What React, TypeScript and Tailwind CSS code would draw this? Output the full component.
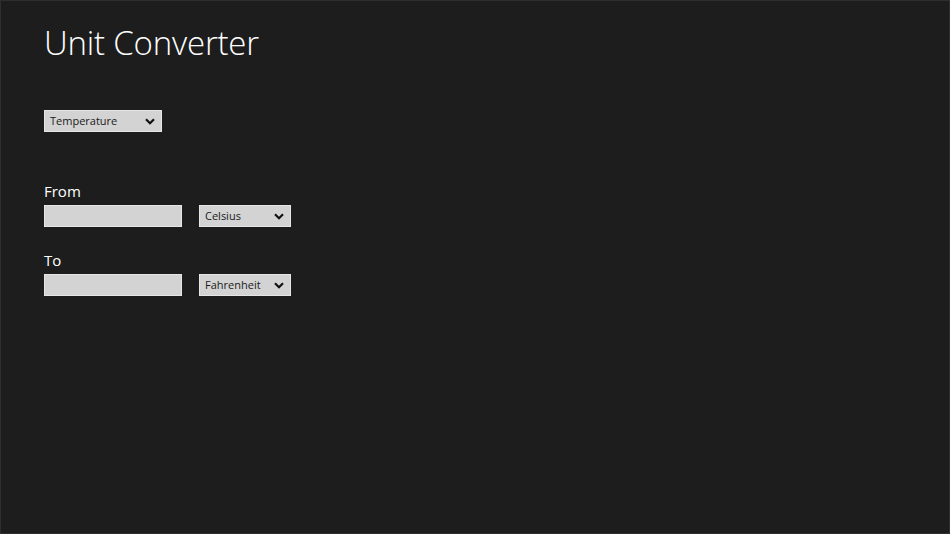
import React from 'react';

const Chevron = () => (
  <svg width="10" height="7" viewBox="0 0 10 7" className="shrink-0">
    <path d="M1 1.2 L5 5.2 L9 1.2" fill="none" stroke="#111" strokeWidth="2.2" />
  </svg>
);

const Select: React.FC<{ label: string; className: string }> = ({ label, className }) => (
  <div className={`flex h-[22px] items-center justify-between border border-[#e6e6e6] bg-[#d3d3d3] pl-[5px] pr-[6px] text-[11px] text-[#1a1a1a] ${className}`}>
    <span>{label}</span>
    <Chevron />
  </div>
);

const App: React.FC = () => {
  return (
    <div
      className="h-[534px] w-[950px] overflow-hidden border border-[#2e2e2e] bg-[#1d1d1d] text-white"
      style={{ fontFamily: '"Open Sans", "Noto Sans", sans-serif' }}
    >
      <div className="flex flex-col pl-[43px] pt-[22px]">
        <h1 className="text-[33px] font-light leading-[40px] tracking-[-0.2px]">Unit Converter</h1>
        <Select label="Temperature" className="mt-[47px] w-[118px]" />

        <div className="mt-[49px] text-[15px] leading-[20px]">From</div>
        <div className="mt-[4px] flex gap-[17px]">
          <div className="h-[22px] w-[138px] border border-[#e6e6e6] bg-[#d3d3d3]" />
          <Select label="Celsius" className="w-[92px]" />
        </div>

        <div className="mt-[23px] text-[15px] leading-[20px]">To</div>
        <div className="mt-[4px] flex gap-[17px]">
          <div className="h-[22px] w-[138px] border border-[#e6e6e6] bg-[#d3d3d3]" />
          <Select label="Fahrenheit" className="w-[92px]" />
        </div>
      </div>
    </div>
  );
};

export default App;
